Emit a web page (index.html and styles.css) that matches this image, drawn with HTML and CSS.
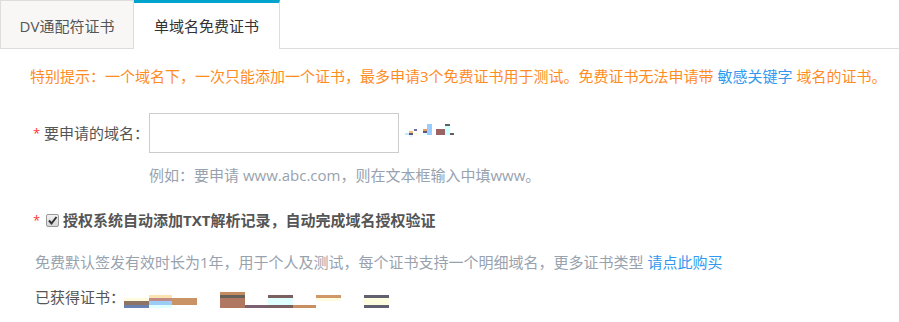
FILE: index.html
```html
<!DOCTYPE html>
<html lang="zh-CN">
<head>
<meta charset="utf-8">
<title>免费证书</title>
<link rel="stylesheet" href="styles.css">
</head>
<body>
<div class="tabs">
  <div class="tab tab-dv">DV通配符证书</div>
  <div class="tab tab-active">单域名免费证书</div>
</div>
<div class="content">
  <p class="warn">特别提示：一个域名下，一次只能添加一个证书，最多申请3个免费证书用于测试。免费证书无法申请带 <a class="link">敏感关键字</a> 域名的证书。</p>
  <div class="form-row">
    <span class="star">*</span>
    <label class="label">要申请的域名：</label>
    <input class="domain-input" type="text">
    <svg class="mosaic" width="60" height="40" viewBox="0 0 60 40">
      <rect x="5" y="20" width="4" height="2" fill="#bfe6ff"/>
      <rect x="9" y="18" width="4" height="2" fill="#f0c080"/>
      <rect x="9" y="20" width="4" height="2" fill="#605880"/>
      <rect x="9" y="22" width="4" height="2" fill="#e6f4ff"/>
      <rect x="14" y="16" width="3" height="2" fill="#7070a0"/>
      <rect x="14" y="20" width="3" height="2" fill="#fffbe0"/>
      <rect x="23" y="16" width="4" height="2" fill="#e0a060"/>
      <rect x="23" y="18" width="4" height="2" fill="#605880"/>
      <rect x="23" y="20" width="4" height="2" fill="#e0ffff"/>
      <rect x="27" y="11" width="5" height="11" fill="#99ccff"/>
      <rect x="36" y="16" width="9" height="6" fill="#9a6464"/>
      <rect x="45" y="11" width="5" height="2" fill="#606060"/>
      <rect x="45" y="13" width="5" height="9" fill="#ccffff"/>
      <rect x="50" y="20" width="4" height="2" fill="#606060"/>
    </svg>
  </div>
  <p class="hint">例如：要申请 www.abc.com，则在文本框输入中填www。</p>
  <div class="check-row">
    <span class="star">*</span>
    <span class="checkbox">
      <svg width="13" height="13" viewBox="0 0 13 13">
        <path d="M3 6.5 L5.5 9.5 L10.5 3" fill="none" stroke="#333" stroke-width="2"/>
      </svg>
    </span>
    <span class="check-text">授权系统自动添加TXT解析记录，自动完成域名授权验证</span>
  </div>
  <p class="desc">免费默认签发有效时长为1年，用于个人及测试，每个证书支持一个明细域名，更多证书类型 <a class="link">请点此购买</a></p>
  <div class="owned-row">
    <span class="owned-label">已获得证书：</span>
    <svg class="bars" width="270" height="22" viewBox="0 0 270 22">
      <rect x="0" y="11" width="25" height="3" fill="#fffbdc"/>
      <rect x="0" y="14" width="25" height="4" fill="#8e7462"/>
      <rect x="0" y="18" width="25" height="3" fill="#6a80b0"/>
      <rect x="25" y="8" width="23" height="3" fill="#fde3b0"/>
      <rect x="25" y="11" width="23" height="3" fill="#c08a86"/>
      <rect x="25" y="14" width="23" height="4" fill="#9cccf8"/>
      <rect x="25" y="18" width="23" height="3" fill="#e0ffff"/>
      <rect x="48" y="11" width="25" height="7" fill="#c99366"/>
      <rect x="96" y="5" width="25" height="3" fill="#c48a60"/>
      <rect x="96" y="8" width="25" height="3" fill="#64605c"/>
      <rect x="96" y="11" width="25" height="10" fill="#b07860"/>
      <rect x="121" y="18" width="23" height="3" fill="#7a6070"/>
      <rect x="144" y="8" width="25" height="3" fill="#7a6060"/>
      <rect x="144" y="11" width="25" height="7" fill="#e0ffff"/>
      <rect x="144" y="18" width="25" height="3" fill="#7a6060"/>
      <rect x="169" y="18" width="23" height="3" fill="#c89060"/>
      <rect x="192" y="8" width="25" height="3" fill="#d09868"/>
      <rect x="192" y="11" width="25" height="3" fill="#fffbe0"/>
      <rect x="240" y="8" width="25" height="3" fill="#606070"/>
      <rect x="240" y="11" width="25" height="7" fill="#fffde0"/>
      <rect x="240" y="18" width="25" height="3" fill="#606070"/>
    </svg>
  </div>
</div>
</body>
</html>
```
FILE: styles.css
```css
html, body {
  margin: 0;
  padding: 0;
  background: #fff;
}
body {
  font-family: "Open Sans", "Noto Sans CJK SC", sans-serif;
  font-size: 15px;
  color: #555;
}
.tabs {
  display: flex;
  height: 48px;
  border-bottom: 1px solid #ddd;
}
.tab {
  box-sizing: border-box;
  text-align: center;
  line-height: 20px;
  white-space: nowrap;
}
.tab-dv {
  width: 134px;
  height: 48px;
  border: 1px solid #ddd;
  border-bottom: none;
  background: #f8f7f5;
  color: #555;
  padding-top: 15px;
}
.tab-active {
  width: 146px;
  height: 49px;
  border-top: 3px solid #00a4cc;
  border-right: 1px solid #ddd;
  background: #fff;
  color: #333;
  padding-top: 13px;
}
.content {
  padding-left: 30px;
}
p {
  margin: 0;
  line-height: 20px;
  white-space: nowrap;
}
.warn {
  margin-top: 17px;
  color: #ff8c1f;
}
.link {
  color: #3399ee;
  text-decoration: none;
}
.form-row {
  display: flex;
  align-items: center;
  margin-top: 27px;
  padding-left: 3px;
}
.star {
  width: 11px;
  flex: none;
  color: #f33;
  font-size: 13px;
  line-height: 20px;
}
.label {
  width: 105px;
  flex: none;
  line-height: 20px;
  white-space: nowrap;
}
.domain-input {
  box-sizing: border-box;
  width: 250px;
  height: 40px;
  margin: 0;
  border: 1px solid #ccc;
  padding: 0 8px;
  font: inherit;
  outline: none;
}
.mosaic {
  display: block;
  margin-left: 1px;
}
.hint {
  margin-top: 12px;
  margin-left: 119px;
  color: #98a2ae;
}
.check-row {
  display: flex;
  align-items: center;
  margin-top: 25px;
  padding-left: 3px;
  height: 20px;
}
.checkbox {
  box-sizing: border-box;
  width: 13px;
  height: 13px;
  flex: none;
  margin-left: 2px;
  margin-right: 4px;
  border: 1px solid #999;
  border-radius: 2px;
  background: linear-gradient(#f2f2f2, #d6d6d6);
  display: flex;
  align-items: center;
  justify-content: center;
}
.checkbox svg {
  display: block;
  flex: none;
}
.check-text {
  font-weight: bold;
  color: #555;
  line-height: 20px;
  white-space: nowrap;
}
.desc {
  margin-top: 22px;
  padding-left: 5px;
  color: #98a2ae;
}
.owned-row {
  display: flex;
  align-items: flex-start;
  margin-top: 15px;
  padding-left: 5px;
}
.owned-label {
  width: 89px;
  flex: none;
  line-height: 20px;
  color: #555;
  white-space: nowrap;
}
.bars {
  display: block;
  flex: none;
}
```
